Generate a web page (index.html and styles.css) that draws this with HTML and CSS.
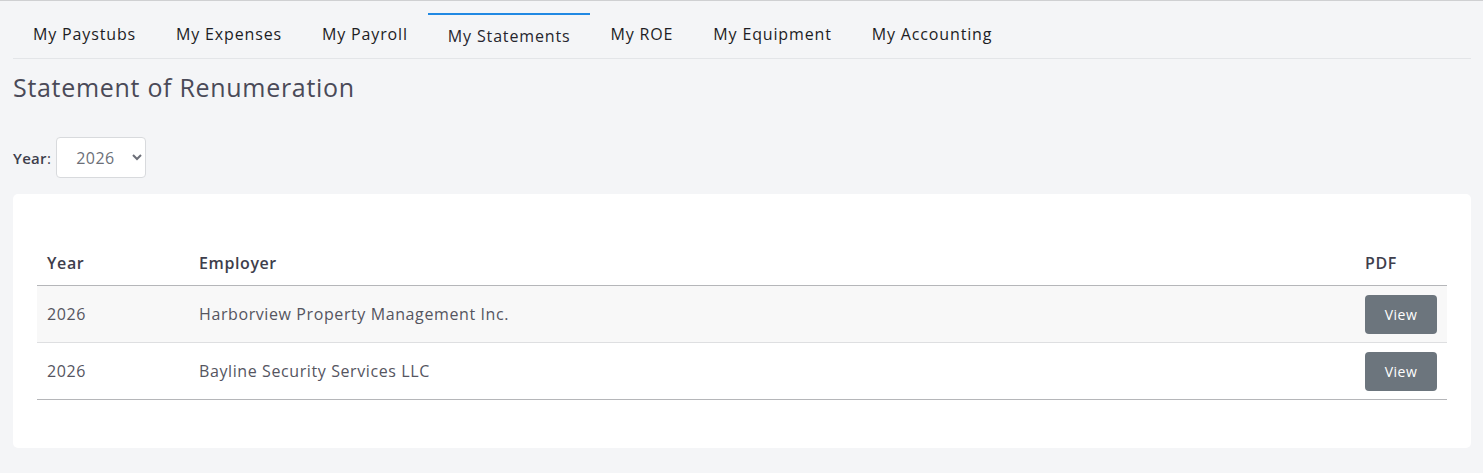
FILE: index.html
```html
<!DOCTYPE html>
<html lang="en">
<head>
  <meta charset="UTF-8">
  <meta name="viewport" content="width=device-width, initial-scale=1.0">
  <title>My Statements</title>
  <link rel="stylesheet" href="styles.css">
</head>
<body>

  <nav class="abas">
    <a href="#" class="aba">My Paystubs</a>
    <a href="#" class="aba">My Expenses</a>
    <a href="#" class="aba">My Payroll</a>
    <a href="#" class="aba ativa">My Statements</a>
    <a href="#" class="aba">My ROE</a>
    <a href="#" class="aba">My Equipment</a>
    <a href="#" class="aba">My Accounting</a>
  </nav>

  <h1 class="titulo">Statement of Renumeration</h1>

  <div class="filtro-ano">
    <label for="ano">Year</label>:
    <select id="ano">
      <option>2026</option>
      <option>2025</option>
      <option>2024</option>
    </select>
  </div>

  <!-- Lista de declaracoes -->
  <div class="cartao">
    <table class="tabela">
      <thead>
        <tr>
          <th class="col-ano">Year</th>
          <th>Employer</th>
          <th class="col-pdf">PDF</th>
        </tr>
      </thead>
      <tbody>
        <tr>
          <td>2026</td>
          <td>Harborview Property Management Inc.</td>
          <td><button class="botao-ver">View</button></td>
        </tr>
        <tr>
          <td>2026</td>
          <td>Bayline Security Services LLC</td>
          <td><button class="botao-ver">View</button></td>
        </tr>
      </tbody>
    </table>
  </div>

</body>
</html>
```

FILE: styles.css
```css
* {
  margin: 0;
  padding: 0;
  box-sizing: border-box;
}

body {
  font-family: "Open Sans", "DejaVu Sans", sans-serif;
  background-color: #f4f5f7;
  color: #4b4b5a;
  border-top: 1px solid #cfd0d2;
  padding: 0 12px 0 13px;
}

/* Abas */
.abas {
  display: flex;
  align-items: flex-start;
  margin-top: 12px;
  border-bottom: 1px solid #e3e5e8;
}

.aba {
  display: block;
  padding: 9px 20px 12px;
  font-size: 16px;
  line-height: 24px;
  color: #1d1d24;
  text-decoration: none;
  letter-spacing: 0.85px;
}

.aba.ativa {
  border-top: 2px solid #2189e3;
  margin-bottom: -2px;
  color: #26262e;
}

.titulo {
  font-size: 25px;
  font-weight: 400;
  line-height: 29px;
  color: #4a4a58;
  margin-top: 14px;
  letter-spacing: 0.7px;
}

/* Filtro de ano */
.filtro-ano {
  display: flex;
  align-items: center;
  margin-top: 35px;
  font-size: 15px;
  color: #3e3e4c;
  letter-spacing: 0.3px;
}

.filtro-ano label {
  font-weight: 600;
}

.filtro-ano select {
  margin-left: 5px;
  width: 90px;
  height: 41px;
  padding: 0 8px 0 15px;
  font-family: inherit;
  font-size: 16px;
  letter-spacing: 0.5px;
  color: #6c6f78;
  background-color: white;
  border: 1px solid #d8dadd;
  border-radius: 4px;
}

/* Cartao com a tabela */
.cartao {
  margin-top: 16px;
  background-color: white;
  border-radius: 5px;
  padding: 44px 24px 48px;
}

.tabela {
  width: 100%;
  border-collapse: collapse;
  font-size: 16px;
  letter-spacing: 0.6px;
}

.tabela th {
  text-align: left;
  font-weight: 600;
  color: #3e3e4c;
  padding: 13px 10px 10px;
  line-height: 24px;
  border-bottom: 1px solid #b5b6b9;
}

.tabela td {
  padding: 8px 10px;
  line-height: 24px;
  height: 57px;
  color: #55555f;
  border-bottom: 1px solid #dedfe1;
}

.tabela tbody tr:nth-child(odd) {
  background-color: #f8f8f8;
}

.tabela tbody tr:last-child td {
  border-bottom-color: #b5b6b9;
}

.tabela .col-ano {
  width: 152px;
}

.tabela .col-pdf {
  width: 82px;
}

.botao-ver {
  display: block;
  width: 72px;
  height: 39px;
  background-color: #6c757d;
  color: white;
  border: none;
  border-radius: 4px;
  font-family: inherit;
  font-size: 14px;
  letter-spacing: 0.5px;
  cursor: pointer;
}
```
